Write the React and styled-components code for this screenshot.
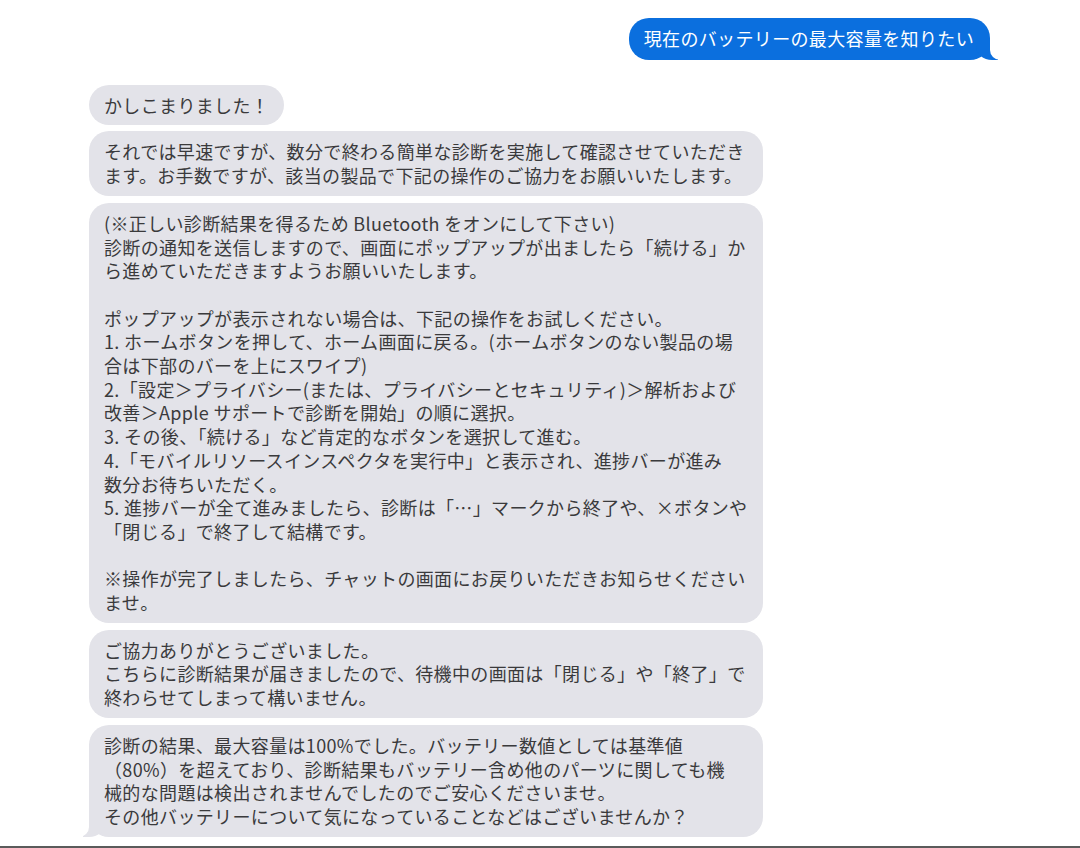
import React from "react";
import styled, { createGlobalStyle } from "styled-components";

const Global = createGlobalStyle`
  html, body { margin: 0; padding: 0; background: #fff; }
  body { font-family: "Noto Sans CJK JP", "Noto Sans", sans-serif; }
  * { box-sizing: border-box; }
`;

const Page = styled.div`
  width: 1080px;
  height: 848px;
  display: flex;
  flex-direction: column;
  border-bottom: 2px solid #5b5b5b;
  overflow: hidden;
`;

const Thread = styled.div`
  flex: 1;
  display: flex;
  flex-direction: column;
  padding: 18px 90px 0 89px;
`;

const Row = styled.div`
  display: flex;
  justify-content: ${(p) => (p.$out ? "flex-end" : "flex-start")};
  margin-top: ${(p) => p.$gap}px;
`;

const Bubble = styled.div`
  position: relative;
  width: ${(p) => (p.$wide ? "674px" : "fit-content")};
  padding: ${(p) => (p.$out ? "9px 16px 9px 15px" : "9px 15px 8px 15px")};
  border-radius: 20px;
  font-size: 18px;
  line-height: 23.7px;
  letter-spacing: 0.35px;
  white-space: nowrap;
  background: ${(p) => (p.$out ? "#0b6fde" : "#e3e3e9")};
  color: ${(p) => (p.$out ? "#ffffff" : "#3a3a3c")};
  z-index: 0;

  ${(p) =>
    p.$tail && p.$out
      ? `
    &::before {
      content: "";
      position: absolute;
      bottom: 0;
      right: -8px;
      width: 22px;
      height: 20px;
      background: #0b6fde;
      border-bottom-left-radius: 16px 14px;
      z-index: -1;
    }
    &::after {
      content: "";
      position: absolute;
      bottom: 0;
      right: -26px;
      width: 26px;
      height: 21px;
      background: #fff;
      border-bottom-left-radius: 10px;
      z-index: -1;
    }
  `
      : ""}

  ${(p) =>
    p.$tail && !p.$out
      ? `
    &::before {
      content: "";
      position: absolute;
      bottom: 0;
      left: -6px;
      width: 22px;
      height: 20px;
      background: #e3e3e9;
      border-bottom-right-radius: 16px 14px;
      z-index: -1;
    }
    &::after {
      content: "";
      position: absolute;
      bottom: 0;
      left: -26px;
      width: 26px;
      height: 21px;
      background: #fff;
      border-bottom-right-radius: 10px;
      z-index: -1;
    }
  `
      : ""}
`;

const Line = styled.div`
  min-height: 23.7px;
`;

const Lines = ({ items }) =>
  items.map((t, i) => <Line key={i}>{t}</Line>);

const msgs = [
  {
    out: true,
    tail: true,
    gap: 0,
    lines: ["現在のバッテリーの最大容量を知りたい"],
  },
  { gap: 25, lines: ["かしこまりました！"] },
  {
    gap: 6,
    wide: true,
    lines: [
      "それでは早速ですが、数分で終わる簡単な診断を実施して確認させていただき",
      "ます。お手数ですが、該当の製品で下記の操作のご協力をお願いいたします。",
    ],
  },
  {
    gap: 7,
    wide: true,
    lines: [
      "(※正しい診断結果を得るため Bluetooth をオンにして下さい)",
      "診断の通知を送信しますので、画面にポップアップが出ましたら「続ける」か",
      "ら進めていただきますようお願いいたします。",
      "",
      "ポップアップが表示されない場合は、下記の操作をお試しください。",
      "1. ホームボタンを押して、ホーム画面に戻る。(ホームボタンのない製品の場",
      "合は下部のバーを上にスワイプ)",
      "2.「設定＞プライバシー(または、プライバシーとセキュリティ)＞解析および",
      "改善＞Apple サポートで診断を開始」の順に選択。",
      "3. その後、「続ける」など肯定的なボタンを選択して進む。",
      "4.「モバイルリソースインスペクタを実行中」と表示され、進捗バーが進み",
      "数分お待ちいただく。",
      "5. 進捗バーが全て進みましたら、診断は「…」マークから終了や、×ボタンや",
      "「閉じる」で終了して結構です。",
      "",
      "※操作が完了しましたら、チャットの画面にお戻りいただきお知らせください",
      "ませ。",
    ],
  },
  {
    gap: 7,
    wide: true,
    lines: [
      "ご協力ありがとうございました。",
      "こちらに診断結果が届きましたので、待機中の画面は「閉じる」や「終了」で",
      "終わらせてしまって構いません。",
    ],
  },
  {
    gap: 7,
    wide: true,
    tail: true,
    lines: [
      "診断の結果、最大容量は100%でした。バッテリー数値としては基準値",
      "（80%）を超えており、診断結果もバッテリー含め他のパーツに関しても機",
      "械的な問題は検出されませんでしたのでご安心くださいませ。",
      "その他バッテリーについて気になっていることなどはございませんか？",
    ],
  },
];

export default function App() {
  return (
    <>
      <Global />
      <Page>
        <Thread>
          {msgs.map((m, i) => (
            <Row key={i} $out={m.out} $gap={m.gap}>
              <Bubble $out={m.out} $wide={m.wide} $tail={m.tail}>
                <Lines items={m.lines} />
              </Bubble>
            </Row>
          ))}
        </Thread>
      </Page>
    </>
  );
}
